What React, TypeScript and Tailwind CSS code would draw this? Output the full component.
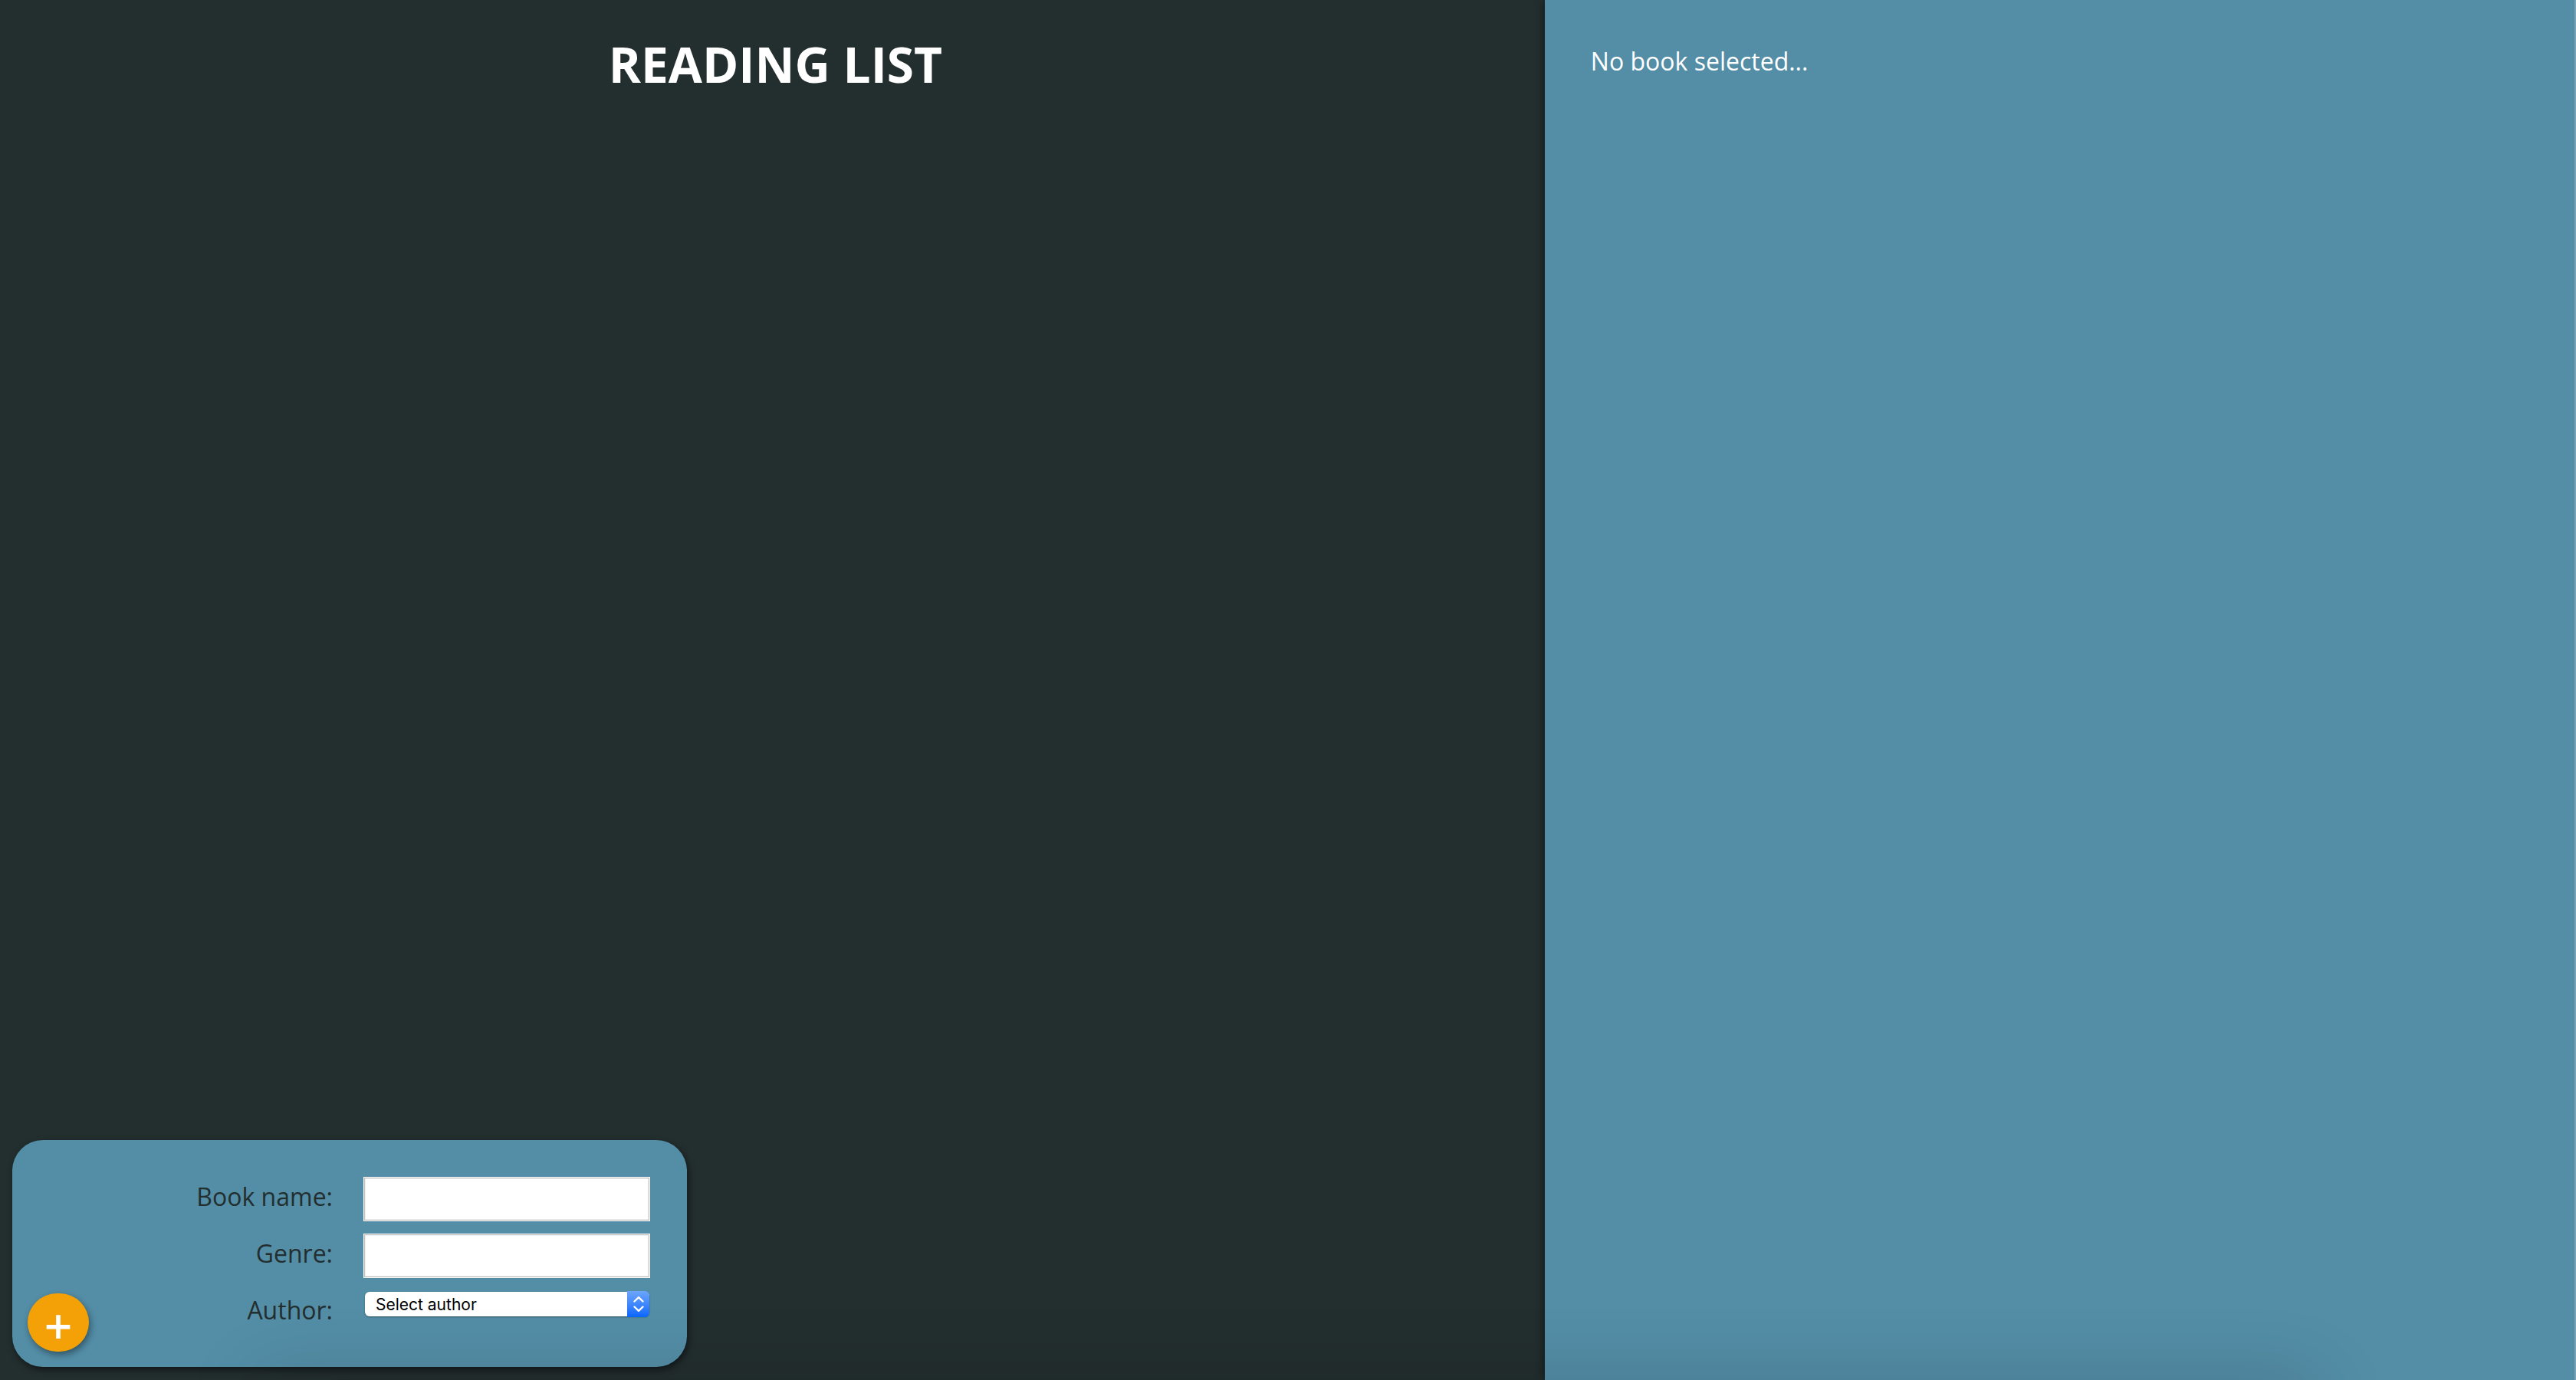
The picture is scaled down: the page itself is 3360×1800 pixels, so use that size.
import React from "react";

const fieldClass =
  "h-[58px] w-full border border-white bg-white px-3 text-[32px] text-black shadow-[inset_0_0_0_1px_#bdbdbd,inset_0_0_0_2px_#efefef] outline-none";

function Field({ id, label, children }: { id: string; label: string; children: React.ReactNode }) {
  return (
    <div className="grid h-[74px] grid-cols-[386px_374px] items-start gap-10">
      <label htmlFor={id} className="pt-1 text-right text-[32px] leading-[44px]">
        {label}
      </label>
      {children}
    </div>
  );
}

function AddBook() {
  return (
    <form
      onSubmit={(e) => e.preventDefault()}
      className="relative w-[880px] rounded-[40px] bg-[#538da6] px-12 pt-12 pb-[26px] text-[#232e2f] shadow-[2px_4px_8px_rgba(0,0,0,0.5)]"
    >
      <div className="flex flex-col items-end">
        <Field id="name" label="Book name:">
          <input id="name" type="text" className={fieldClass} />
        </Field>
        <Field id="genre" label="Genre:">
          <input id="genre" type="text" className={fieldClass} />
        </Field>
        <Field id="author" label="Author:">
          <div className="relative mr-px ml-0.5 mt-0.5 flex h-8 rounded-md shadow-[0_1px_2px_rgba(0,0,0,0.4)]">
            <select
              id="author"
              className="h-full w-full appearance-none rounded-md bg-white pt-0.5 pl-[14px] font-['Inter',sans-serif] text-[21px] leading-[30px] text-black outline-none"
            >
              <option>Select author</option>
            </select>
            <span className="pointer-events-none absolute -inset-y-px right-0 flex w-[29px] items-center justify-center rounded-r-md bg-linear-to-b from-[#6ba4fb] to-[#0567ff]">
              <svg width="14" height="22" viewBox="0 0 14 22" fill="none" stroke="white" strokeWidth="2.4" strokeLinecap="round" strokeLinejoin="round">
                <path d="M1.5 7.5 7 2.2 12.5 7.5M1.5 14.5 7 19.8 12.5 14.5" />
              </svg>
            </span>
          </div>
        </Field>
      </div>
      <button
        type="submit"
        aria-label="Add book"
        className="absolute bottom-5 left-5 h-[76px] w-20 rounded-full bg-[#f3a106] pt-2 text-[64px] leading-[68px] font-semibold text-white shadow-[2px_4px_8px_rgba(0,0,0,0.4)]"
      >
        +
      </button>
    </form>
  );
}

export default function App() {
  return (
    <div className="relative flex min-h-screen overflow-hidden border-r-2 border-[#76a3b6] bg-[#232e2f] font-['Open_Sans',sans-serif]">
      <main className="flex w-3/5 flex-col justify-between">
        <h1 className="pt-10 pl-2 text-center text-[64px] leading-[88px] font-bold text-white">READING LIST</h1>
        <div className="px-4 pb-[17px]">
          <AddBook />
        </div>
      </main>
      <aside className="w-2/5 bg-[#538da6] p-[60px] pt-[58px] text-[32px] leading-[44px] text-white shadow-[-2px_0_10px_rgba(0,0,0,0.4)]">
        <p>No book selected...</p>
      </aside>
      {/* Soft shade along the bottom edge */}
      <div className="pointer-events-none absolute inset-x-[10%] top-full h-20 shadow-[0_0_100px_rgba(0,0,0,0.15)]" />
    </div>
  );
}
